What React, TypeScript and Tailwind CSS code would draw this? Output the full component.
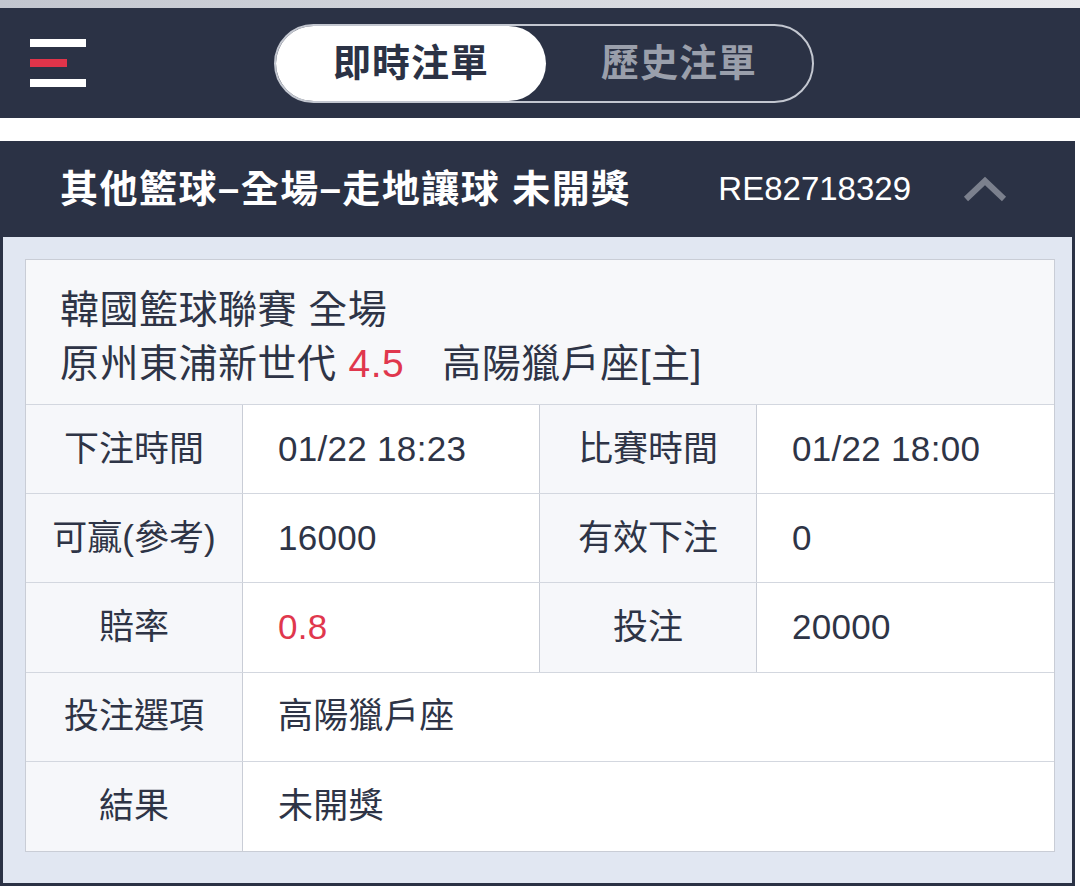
import React from 'react';

const rows = [
  [
    { label: '下注時間', value: '01/22 18:23' },
    { label: '比賽時間', value: '01/22 18:00' },
  ],
  [
    { label: '可贏(參考)', value: '16000' },
    { label: '有效下注', value: '0' },
  ],
  [
    { label: '賠率', value: '0.8', red: true },
    { label: '投注', value: '20000' },
  ],
  [{ label: '投注選項', value: '高陽獵戶座' }],
  [{ label: '結果', value: '未開獎' }],
];

function Cell({ label, value, red, wide }: { label: string; value: string; red?: boolean; wide?: boolean }) {
  return (
    <>
      <div className="w-[217px] shrink-0 flex items-center justify-center bg-[#f6f7fa] border-r border-[#c9cdd6]">
        {label}
      </div>
      <div
        className={`${wide ? 'flex-1' : 'w-[297px] border-r border-[#c9cdd6]'} flex items-center pl-[35px] bg-white ${
          red ? 'text-[#e0374d]' : ''
        }`}
      >
        <span className="tracking-[0.3px]">{value}</span>
      </div>
    </>
  );
}

export default function App() {
  return (
    <div className="w-[1080px] h-[894px] bg-white overflow-hidden font-['Liberation_Sans','Noto_Sans_CJK_TC',sans-serif] text-[#2e3446]">
      {/* status strip */}
      <div className="h-[8px] bg-gradient-to-r from-[#c2c6cf] to-[#e8e9ed]" />

      {/* top bar */}
      <header className="h-[110px] bg-[#2b3245] flex items-center pl-[30px]">
        <div className="w-[56px] flex flex-col gap-[12px]">
          <span className="h-[8px] w-[56px] bg-white" />
          <span className="h-[8px] w-[37px] bg-[#e0344a]" />
          <span className="h-[8px] w-[56px] bg-white" />
        </div>
        <div className="ml-[188px] w-[540px] h-[79px] rounded-full border-2 border-[#c3c7d0] flex items-stretch">
          <div className="w-[270px] rounded-full bg-white flex items-center justify-center text-[38px] font-bold text-[#2b3245] tracking-[1px]">
            即時注單
          </div>
          <div className="flex-1 flex items-center justify-center text-[38px] font-bold text-[#9a9fab] tracking-[1px]">
            歷史注單
          </div>
        </div>
      </header>

      <div className="h-[23px]" />

      {/* bet card */}
      <section className="w-[1075px] border-[3px] border-t-0 border-[#2b3245]">
        <div className="h-[96px] bg-[#2b3245] flex items-center pl-[57px] pr-[65px] text-white">
          <h1 className="text-[38px] font-bold tracking-[1.5px]">其他籃球–全場–走地讓球 未開獎</h1>
          <span className="ml-auto text-[33px]">RE82718329</span>
          <svg className="ml-[52px]" width="44" height="26" viewBox="0 0 44 26" fill="none">
            <path d="M3 23 L22 5 L41 23" stroke="#7b808d" strokeWidth="6" />
          </svg>
        </div>

        <div className="bg-[#e1e7f2] pt-[22px] pb-[31px] pl-[22px] pr-[17px]">
          <div className="border border-[#c9cdd6] bg-white">
            <div className="h-[145px] bg-[#f7f8fa] flex flex-col justify-center pt-[10px] pl-[34px] text-[39px] leading-[54px] tracking-[0.5px] border-b border-[#d3d7df]">
              <div>韓國籃球聯賽 全場</div>
              <div className="flex">
                <span>原州東浦新世代</span>
                <span className="ml-[12px] text-[#e0374d]">4.5</span>
                <span className="ml-[38px]">高陽獵戶座[主]</span>
              </div>
            </div>
            {rows.map((row, i) => (
              <div
                key={i}
                className={`h-[89.2px] flex text-[35px] ${i < rows.length - 1 ? 'border-b border-[#d3d7df]' : ''}`}
              >
                {row.length === 2 ? (
                  <>
                    <Cell {...row[0]} />
                    <Cell {...row[1]} wide />
                  </>
                ) : (
                  <Cell {...row[0]} wide />
                )}
              </div>
            ))}
          </div>
        </div>
      </section>
    </div>
  );
}
